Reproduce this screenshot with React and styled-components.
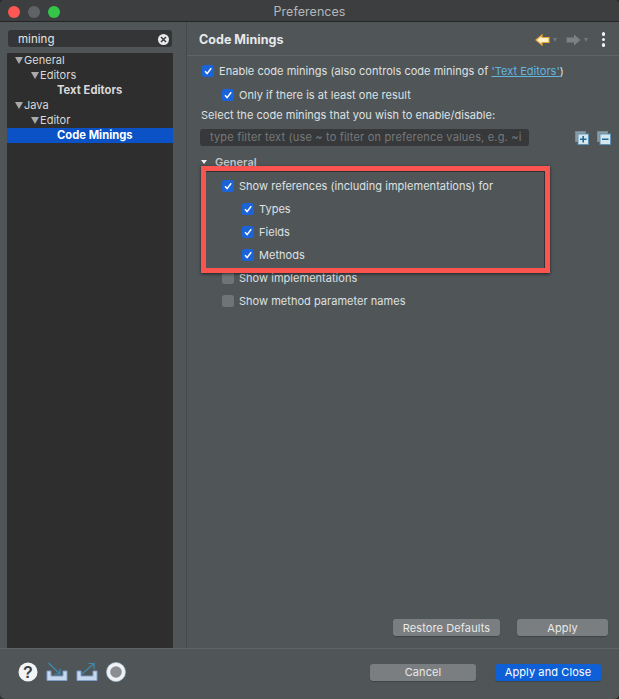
import React from "react";
import styled, { createGlobalStyle } from "styled-components";

const GlobalStyle = createGlobalStyle`
  html, body {
    margin: 0;
    padding: 0;
    background: #2b2c2d;
  }
  * {
    box-sizing: border-box;
  }
`;

const treeItems = [
  { text: "General", level: 0, arrow: true },
  { text: "Editors", level: 1, arrow: true },
  { text: "Text Editors", level: 2, bold: true },
  { text: "Java", level: 0, arrow: true },
  { text: "Editor", level: 1, arrow: true },
  { text: "Code Minings", level: 2, bold: true, selected: true },
];

const options = [
  { text: "Show references (including implementations) for", level: 1, checked: true },
  { text: "Types", level: 2, checked: true },
  { text: "Fields", level: 2, checked: true },
  { text: "Methods", level: 2, checked: true },
  { text: "Show implementations", level: 1 },
  { text: "Show method parameter names", level: 1 },
];

function Check({ checked, level = 0 }) {
  return (
    <CheckBox $checked={checked} $level={level}>
      {checked && (
        <svg width="12" height="12" viewBox="0 0 12 12">
          <path d="M3 6.3 L5.1 8.6 L9.2 3.2" fill="none" stroke="#fff" strokeWidth="1.5" />
        </svg>
      )}
    </CheckBox>
  );
}

function BackArrow() {
  return (
    <svg width="15" height="12" viewBox="0 0 15 12">
      <path d="M1 6 L7 1 V3.5 H14 V8.5 H7 V11 Z" fill="#fdf3c8" stroke="#e9a63c" strokeWidth="1.2" />
    </svg>
  );
}

function ForwardArrow() {
  return (
    <svg width="15" height="12" viewBox="0 0 15 12">
      <path d="M14.5 6 L8 0.5 V3.5 H0.5 V8.5 H8 V11.5 Z" fill="#7c8183" />
    </svg>
  );
}

function TreeIcon({ minus }) {
  return (
    <svg width="14" height="14" viewBox="0 0 14 14">
      <rect x="0.5" y="0.5" width="10" height="10" fill="#8d9ba3" stroke="#7b8b95" />
      <rect x="3" y="3" width="10.5" height="10.5" fill="#d8e6ee" stroke="#5d93b8" />
      <path d={minus ? "M5 8.2 H11.5" : "M5 8.2 H11.5 M8.2 5 V11.5"} stroke="#1f6a98" strokeWidth="1.6" />
    </svg>
  );
}

function HelpIcon() {
  return (
    <svg width="20" height="20" viewBox="0 0 20 20">
      <circle cx="10" cy="10" r="9.5" fill="#f3f4f5" />
      <text x="10" y="15.5" textAnchor="middle" fontSize="16" fontWeight="700" fontFamily="Liberation Sans, sans-serif" fill="#3b4044">
        ?
      </text>
    </svg>
  );
}

function ImportIcon() {
  return (
    <svg width="22" height="20" viewBox="0 0 22 20">
      <path d="M1 9 V18.5 H21 V9 H17 V14 H5 V9 Z" fill="#c7d9ee" stroke="#7f9fc8" />
      <path d="M2.5 1 L14 12 M14 6.5 V12 H8.5" fill="none" stroke="#3f8bb0" strokeWidth="1.2" />
    </svg>
  );
}

function ExportIcon() {
  return (
    <svg width="22" height="20" viewBox="0 0 22 20">
      <path d="M1 9 V18.5 H21 V9 H17 V14 H5 V9 Z" fill="#c7d9ee" stroke="#7f9fc8" />
      <path d="M6 12 L18 1.5 M12.5 1.5 H18 V7" fill="none" stroke="#3f8bb0" strokeWidth="1.2" />
    </svg>
  );
}

function RecordIcon() {
  return (
    <svg width="20" height="20" viewBox="0 0 20 20">
      <circle cx="10" cy="10" r="9.5" fill="#eef2f5" stroke="#a9c4da" strokeWidth="0.6" />
      <circle cx="10" cy="10" r="5.8" fill="#8b8f91" />
    </svg>
  );
}

export default function App() {
  return (
    <>
      <GlobalStyle />
      <Window>
        <TitleBar>
          <Lights>
            <Light $color="#fc5753" />
            <Light $color="#606365" />
            <Light $color="#34c648" />
          </Lights>
          Preferences
        </TitleBar>
        <Main>
          <LeftPane>
            <Search>
              mining
              <ClearButton>
                <svg width="7" height="7" viewBox="0 0 7 7">
                  <path d="M1 1 L6 6 M6 1 L1 6" stroke="#3a3c3e" strokeWidth="1.5" />
                </svg>
              </ClearButton>
            </Search>
            <Tree>
              {treeItems.map((item) => (
                <TreeRow key={item.text} $level={item.level} $bold={item.bold} $selected={item.selected}>
                  {item.arrow && <TreeArrow />}
                  {item.text}
                </TreeRow>
              ))}
            </Tree>
          </LeftPane>
          <RightPane>
            <Header>
              <Title>Code Minings</Title>
              <NavIcons>
                <BackArrow />
                <Caret />
                <ForwardArrow />
                <Caret />
                <MoreDots>
                  <i />
                  <i />
                  <i />
                </MoreDots>
              </NavIcons>
            </Header>
            <Content>
              <OptionRow>
                <Check checked />
                <span>
                  Enable code minings (also controls code minings of <TextLink>'Text Editors'</TextLink>)
                </span>
              </OptionRow>
              <OptionRow $top={9}>
                <Check checked level={1} />
                Only if there is at least one result
              </OptionRow>
              <SelectLabel>Select the code minings that you wish to enable/disable:</SelectLabel>
              <FilterRow>
                <FilterInput>type filter text (use ~ to filter on preference values, e.g. ~i</FilterInput>
                <FilterIcons>
                  <TreeIcon />
                  <TreeIcon minus />
                </FilterIcons>
              </FilterRow>
              <SectionTitle>
                <SectionArrow />
                General
              </SectionTitle>
              <OptionList>
                {options.map((opt) => (
                  <OptionRow key={opt.text}>
                    <Check checked={opt.checked} level={opt.level} />
                    {opt.text}
                  </OptionRow>
                ))}
              </OptionList>
              <RedBox />
            </Content>
            <PaneButtons>
              <Button $width={107}>Restore Defaults</Button>
              <Button $width={91}>Apply</Button>
            </PaneButtons>
          </RightPane>
        </Main>
        <Footer>
          <FooterIcons>
            <HelpIcon />
            <ImportIcon />
            <ExportIcon />
            <RecordIcon />
          </FooterIcons>
          <FooterButtons>
            <Button $width={106}>Cancel</Button>
            <Button $width={106} $primary>
              Apply and Close
            </Button>
          </FooterButtons>
        </Footer>
      </Window>
    </>
  );
}

const Window = styled.div`
  width: 619px;
  height: 699px;
  display: flex;
  flex-direction: column;
  background: #505558;
  border-radius: 5px;
  overflow: hidden;
  color: #dfe1e2;
  font-family: Inter, "Liberation Sans", sans-serif;
  font-size: 11px;
  letter-spacing: 0.03px;
`;

const TitleBar = styled.div`
  position: relative;
  height: 22px;
  flex: none;
  display: flex;
  align-items: center;
  justify-content: center;
  padding-top: 2px;
  background: #3c3e40;
  border-bottom: 1px solid #232425;
  color: #b4b6b8;
  font-size: 12.5px;
`;

const Lights = styled.div`
  position: absolute;
  left: 8px;
  top: 6px;
  display: flex;
  gap: 8px;
`;

const Light = styled.span`
  width: 12px;
  height: 12px;
  border-radius: 50%;
  background: ${(p) => p.$color};
`;

const Main = styled.div`
  flex: 1;
  display: flex;
  min-height: 0;
`;

const LeftPane = styled.div`
  width: 187px;
  flex: none;
  padding: 8px 13px 0 7px;
  display: flex;
  flex-direction: column;
  border-right: 1px solid #45494b;
`;

const Search = styled.div`
  height: 17px;
  margin: 0 1px 6px;
  padding: 1px 0 0 10px;
  display: flex;
  align-items: center;
  justify-content: space-between;
  background: #333537;
  border-radius: 3px;
  color: #e4e5e6;
  font-size: 11.5px;
`;

const ClearButton = styled.span`
  width: 11px;
  height: 11px;
  margin-right: 3px;
  border-radius: 50%;
  background: #e8e9ea;
  display: flex;
  align-items: center;
  justify-content: center;
`;

const Tree = styled.div`
  flex: 1;
  background: #2e2e2e;
`;

const TreeRow = styled.div`
  height: 15px;
  padding-bottom: 1px;
  padding-left: ${(p) => (p.$bold ? 50 : p.$level * 16 + 18)}px;
  display: flex;
  align-items: center;
  font-weight: ${(p) => (p.$bold ? 700 : 400)};
  background: ${(p) => (p.$selected ? "#0a52c6" : "transparent")};
  color: ${(p) => (p.$selected ? "#fff" : "#d9d9d9")};
  font-size: ${(p) => (p.$bold ? 11.2 : 11)}px;
`;

const TreeArrow = styled.span`
  flex: none;
  width: 0;
  height: 0;
  margin-left: -10px;
  margin-right: 1px;
  border-left: 4.5px solid transparent;
  border-right: 4.5px solid transparent;
  border-top: 7px solid #a9a9a9;
`;

const RightPane = styled.div`
  flex: 1;
  min-width: 0;
  display: flex;
  flex-direction: column;
  padding-bottom: 12px;
`;

const Header = styled.div`
  height: 34px;
  flex: none;
  display: flex;
  align-items: center;
  justify-content: space-between;
  padding: 2px 14px 0 12px;
  border-bottom: 1px solid #5e6366;
`;

const Title = styled.div`
  font-size: 12.5px;
  font-weight: 700;
  color: #e8e9ea;
`;

const NavIcons = styled.div`
  display: flex;
  align-items: center;
`;

const Caret = styled.span`
  width: 0;
  height: 0;
  margin: 1px 9px 0 3px;
  border-left: 2.5px solid transparent;
  border-right: 2.5px solid transparent;
  border-top: 4px solid #73787b;

  &:nth-of-type(2) {
    margin-right: 14px;
  }
`;

const MoreDots = styled.div`
  display: flex;
  flex-direction: column;
  gap: 2px;

  i {
    width: 3.5px;
    height: 3.5px;
    border-radius: 50%;
    background: #f2f2f2;
  }
`;

const Content = styled.div`
  position: relative;
  flex: 1;
  padding: 7px 0 0 15px;
`;

const OptionRow = styled.div`
  display: flex;
  align-items: center;
  height: 15px;
  margin-top: ${(p) => p.$top || 0}px;
  white-space: nowrap;
`;

const CheckBox = styled.span`
  width: 12px;
  height: 12px;
  flex: none;
  margin-left: ${(p) => p.$level * 20}px;
  margin-right: 5px;
  border-radius: 2.5px;
  background: ${(p) => (p.$checked ? "#1a63d8" : "#6f7476")};
  display: flex;
`;

const TextLink = styled.a`
  color: #62b6e0;
  text-decoration: underline;
`;

const SelectLabel = styled.div`
  margin: 6px 0 0 -1px;
  height: 15px;
  white-space: nowrap;
  line-height: 15px;
`;

const FilterRow = styled.div`
  display: flex;
  align-items: center;
  margin: 6px 0 0 -2px;
`;

const FilterInput = styled.div`
  width: 329px;
  height: 17px;
  padding-left: 10px;
  background: #36383a;
  border-radius: 3px;
  color: #76797b;
  line-height: 17px;
  letter-spacing: 0.18px;
  white-space: nowrap;
  overflow: hidden;
`;

const FilterIcons = styled.div`
  display: flex;
  gap: 8px;
  margin-left: 46px;
`;

const SectionTitle = styled.div`
  display: flex;
  align-items: center;
  height: 14px;
  margin: 9px 0 0 -1px;
  font-weight: 600;
  color: #c3c6c8;
`;

const SectionArrow = styled.span`
  flex: none;
  width: 0;
  height: 0;
  margin-right: 8px;
  border-left: 3.5px solid transparent;
  border-right: 3.5px solid transparent;
  border-top: 4px solid #eee;
`;

const OptionList = styled.div`
  display: flex;
  flex-direction: column;
  gap: 8px;
  margin-top: 9px;
`;

const RedBox = styled.div`
  position: absolute;
  left: 14px;
  top: 110px;
  width: 349px;
  height: 107px;
  border: 5px solid #fb5450;
  box-shadow: 0 1px 3px rgba(0, 0, 0, 0.6), inset -1px 1px 0 #2f3133;
`;

const PaneButtons = styled.div`
  display: flex;
  justify-content: flex-end;
  gap: 17px;
  padding-right: 11px;
`;

const Button = styled.div`
  width: ${(p) => p.$width}px;
  height: 17px;
  display: flex;
  align-items: center;
  justify-content: center;
  border-radius: 3px;
  background: ${(p) => (p.$primary ? "#0f5fd6" : "#7a7e80")};
  color: ${(p) => (p.$primary ? "#fff" : "#e8e9ea")};
  letter-spacing: 0.1px;
  box-shadow: 0 1px 1px rgba(0, 0, 0, 0.2);
`;

const Footer = styled.div`
  height: 51px;
  flex: none;
  display: flex;
  align-items: center;
  justify-content: space-between;
  padding: 0 18px 4px;
  border-top: 1px solid #5e6366;
`;

const FooterIcons = styled.div`
  display: flex;
  align-items: center;
  gap: 8px;
`;

const FooterButtons = styled.div`
  display: flex;
  gap: 19px;
`;
